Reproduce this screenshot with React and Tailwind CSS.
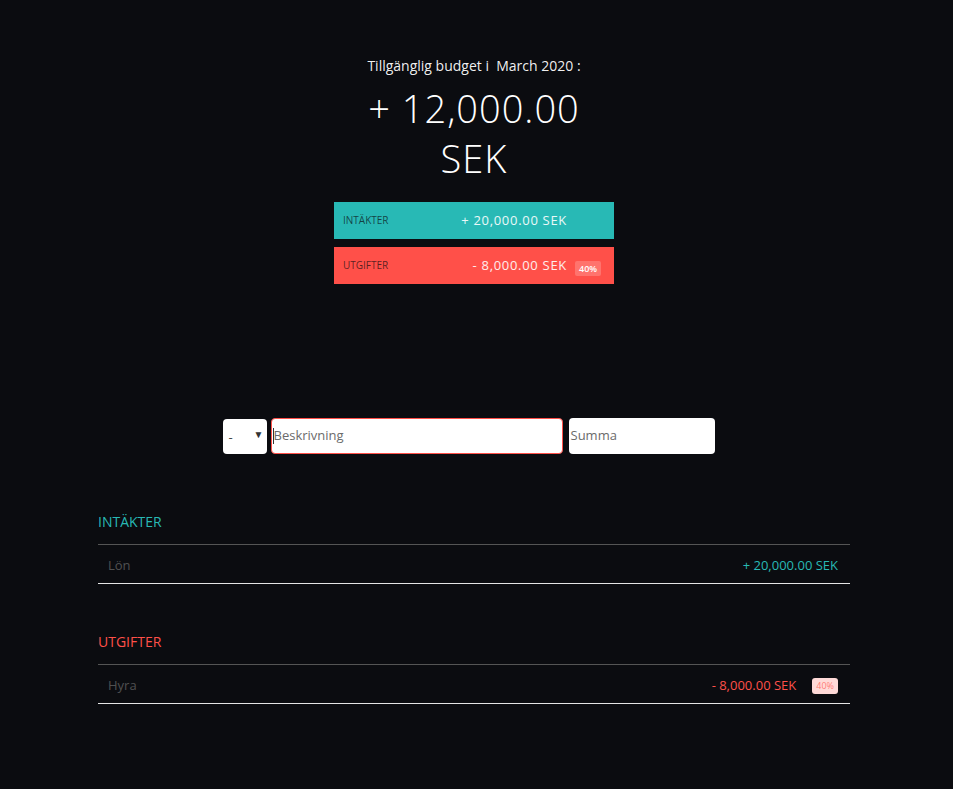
import React from 'react'

const font = { fontFamily: '"Open Sans", "Noto Sans", sans-serif' }

function TopBar({ label, value, color, percent }) {
  return (
    <div className={`flex items-center h-[37px] w-[280px] ${color}`}>
      <div className="w-[95px] pl-[9px] text-[10px] uppercase text-[#0b0c10]/70">{label}</div>
      <div className="w-[138px] text-right text-[13px] font-medium text-white/90 tracking-[0.7px]">{value}</div>
      <div className="w-[47px] pl-[8px]">
        {percent && (
          <span className="inline-block rounded-[2px] bg-white/20 px-[4px] py-[1px] text-[9px] font-semibold text-white">
            {percent}
          </span>
        )}
      </div>
    </div>
  )
}

function ListSection({ title, titleColor, name, value, valueColor, percent }) {
  return (
    <div className="w-[752px]">
      <h2 className={`text-[14px] uppercase h-[36px] leading-[28px] ${titleColor}`}>{title}</h2>
      <div className="border-t border-[#555]">
        <div className="flex items-center h-[39px] pt-[3px] pl-[10px] pr-[12px] border-b border-[#e5e5e5]">
          <div className="flex-1 text-[13px] text-[#505050]">{name}</div>
          <div className={`text-[13px] ${valueColor}`}>{value}</div>
          {percent && (
            <div className="ml-[16px] rounded-[3px] bg-[#ffdad8] px-[4px] h-[16px] leading-[16px] text-[9px] text-[#ff5049]/70">
              {percent}
            </div>
          )}
        </div>
      </div>
    </div>
  )
}

export default function App() {
  return (
    <div className="min-h-[789px] bg-[#0b0c10]" style={font}>
      <div className="w-[948px] flex flex-col items-center">
        <div className="pt-[55px] text-[14px] text-white/95">
          Tillgänglig budget i&nbsp; <span>March 2020</span> :
        </div>
        <div className="w-[250px] mt-[7px] text-center text-[38px] font-light leading-[50px] text-white tracking-[1px]">
          + 12,000.00 SEK
        </div>
        <div className="mt-[19px] flex flex-col gap-[8px]">
          <TopBar label="Intäkter" value="+ 20,000.00 SEK" color="bg-[#28b9b5]" />
          <TopBar label="Utgifter" value="- 8,000.00 SEK" color="bg-[#ff5049]" percent="40%" />
        </div>

        <div className="mt-[134px] mr-[11px] flex items-center gap-[4px]">
          <div className="relative w-[44px] h-[35px] rounded-[4px] bg-white">
            <span className="absolute left-[6px] top-[9px] text-[13px] text-[#444]">-</span>
            <span className="absolute right-[3px] top-[8px] text-[10px] text-[#333]">▼</span>
          </div>
          <div className="w-[292px] h-[36px] rounded-[4px] bg-white border border-[#ff5049] flex items-center pl-[1px]">
            <span className="w-px h-[16px] bg-[#333]" />
            <span className="text-[13px] text-[#6b6b6b]">Beskrivning</span>
          </div>
          <div className="ml-[2px] w-[146px] h-[36px] rounded-[4px] bg-white flex items-center pl-[2px]">
            <span className="text-[13px] text-[#6b6b6b]">Summa</span>
          </div>
        </div>

        <div className="mt-[54px] flex flex-col gap-[44px]">
          <ListSection
            title="Intäkter"
            titleColor="text-[#28b9b5]"
            name="Lön"
            value="+ 20,000.00 SEK"
            valueColor="text-[#28b9b5]"
          />
          <ListSection
            title="Utgifter"
            titleColor="text-[#ff5049]"
            name="Hyra"
            value="- 8,000.00 SEK"
            valueColor="text-[#ff5049]"
            percent="40%"
          />
        </div>
      </div>
    </div>
  )
}
